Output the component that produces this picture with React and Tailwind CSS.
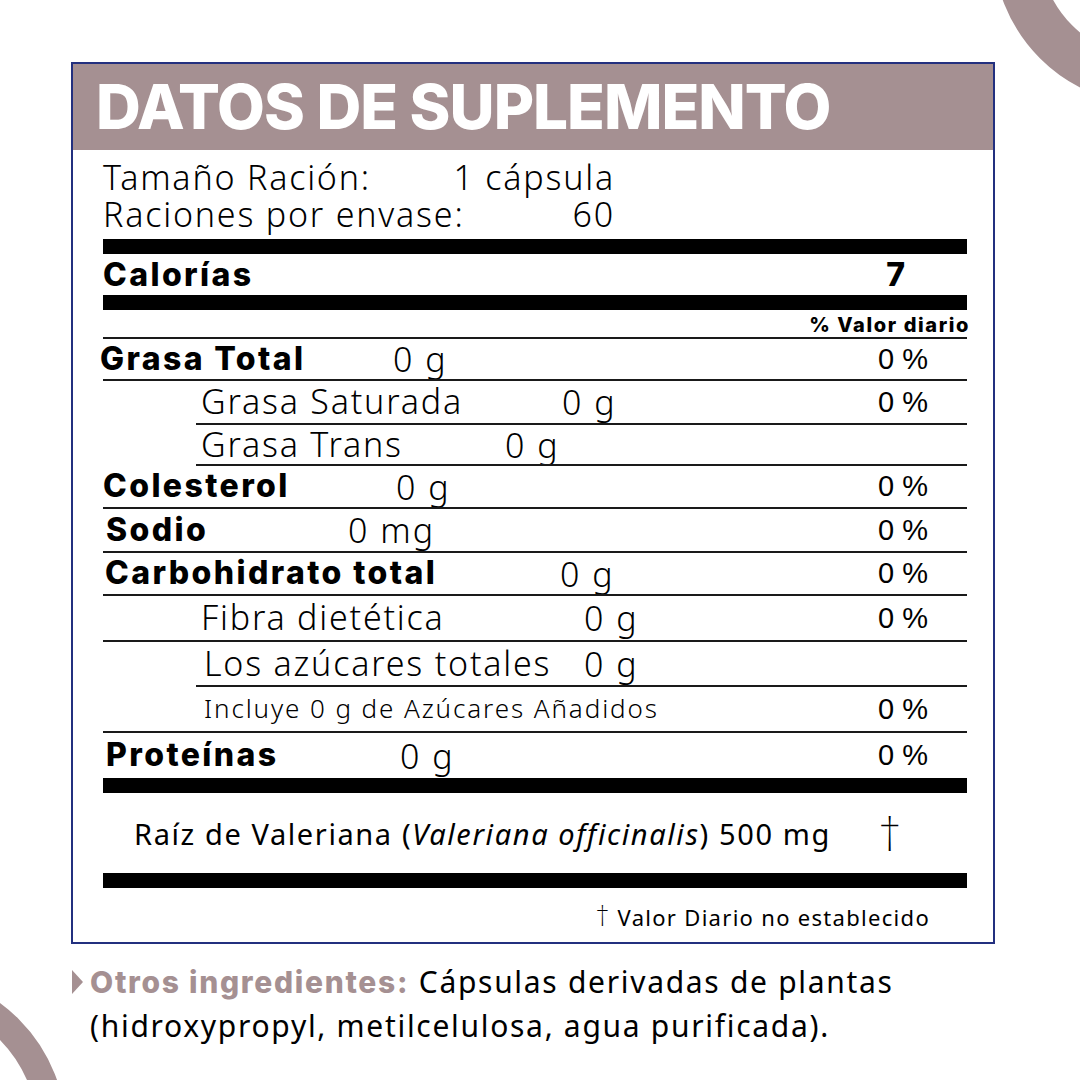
import React from "react";

const Line = ({ indent }) => (
  <div className={indent ? "ml-[93px] h-[2px] bg-[#1a1a1a]" : "h-[2px] bg-[#1a1a1a]"} />
);

const Bar = () => <div className="h-[15px] bg-black" />;

const Row = ({ h, labelBox, labelCls, label, value, pct }) => (
  <div className={`flex items-center ${h}`}>
    <div className={labelBox}>
      <span className={labelCls}>{label}</span>
    </div>
    {value && (
      <span className="font-['Noto_Sans',sans-serif] text-[34px] font-light leading-none tracking-[2px]">
        {value}
      </span>
    )}
    {pct && (
      <span className="ml-auto mr-[39px] font-['Liberation_Sans',sans-serif] text-[29px] leading-none">
        {pct}
      </span>
    )}
  </div>
);

const BOLD = "font-['Inter',sans-serif] text-[32px] font-extrabold leading-none tracking-[2.4px]";
const LIGHT = "font-['Noto_Sans',sans-serif] text-[34px] font-light leading-none tracking-[1.8px]";

export default function App() {
  return (
    <div className="relative w-[1080px] h-[1080px] overflow-hidden bg-white font-['Inter',sans-serif] text-black">
      {/* decorative rings */}
      <div className="absolute left-[993px] top-[-215px] w-[320px] h-[320px] rounded-full border-[46px] border-[#a59092]" />
      <div className="absolute left-[-256px] top-[972px] w-[322px] h-[322px] rounded-full border-[28px] border-[#a59092]" />

      <div className="relative pt-[62px] pl-[71px]">
        <div className="w-[924px] h-[882px] border-2 border-[#23307f] flex flex-col">
          <div className="h-[86px] bg-[#a59092] flex items-center pl-[23px]">
            <span className="text-white text-[62px] font-extrabold leading-none tracking-[-1px]">
              DATOS DE SUPLEMENTO
            </span>
          </div>

          <div className="pl-[30px] pr-[26px] flex flex-col">
            {/* serving */}
            <div className="pt-[9px] pb-[6px] w-[512px] font-['Noto_Sans',sans-serif] text-[34px] font-light tracking-[1.8px]">
              <div className="flex justify-between">
                <span className="inline-block h-[37px] leading-[37px]">Tamaño Ración:</span>
                <span className="inline-block h-[37px] leading-[37px]">1 cápsula</span>
              </div>
              <div className="flex justify-between">
                <span className="inline-block h-[37px] leading-[37px]">Raciones por envase:</span>
                <span className="inline-block h-[37px] leading-[37px]">60</span>
              </div>
            </div>
            <Bar />
            <div className="h-[41px] flex items-center justify-between">
              <span className={BOLD}>Calorías</span>
              <span className="mr-[62px] text-[32px] font-extrabold leading-none">7</span>
            </div>
            <Bar />
            <div className="h-[27px] flex items-end justify-end">
              <span className="-mr-[3px] text-[20px] font-extrabold leading-[24px] tracking-[1.6px]">% Valor diario</span>
            </div>
            <Line />
            <Row h="h-[40px]" labelBox="w-[293px] -ml-[3px]" labelCls={BOLD} label="Grasa Total" value="0 g" pct="0 %" />
            <Line />
            <Row h="h-[42px]" labelBox="w-[459px] pl-[98px]" labelCls={LIGHT} label="Grasa Saturada" value="0 g" pct="0 %" />
            <Line indent />
            <Row h="h-[39px]" labelBox="w-[402px] pl-[98px]" labelCls={LIGHT} label="Grasa Trans" value="0 g" />
            <Line indent />
            <Row h="h-[41px]" labelBox="w-[293px]" labelCls={BOLD} label="Colesterol" value="0 g" pct="0 %" />
            <Line />
            <Row h="h-[42px]" labelBox="w-[245px] pl-[3px]" labelCls={BOLD} label="Sodio" value="0 mg" pct="0 %" />
            <Line />
            <Row h="h-[41px]" labelBox="w-[457px] pl-[2px]" labelCls={BOLD} label="Carbohidrato total" value="0 g" pct="0 %" />
            <Line />
            <Row h="h-[44px]" labelBox="w-[481px] pl-[98px]" labelCls={LIGHT} label="Fibra dietética" value="0 g" pct="0 %" />
            <Line />
            <Row h="h-[43px]" labelBox="w-[481px] pl-[101px]" labelCls={LIGHT} label="Los azúcares totales" value="0 g" />
            <Line indent />
            <Row
              h="h-[44px]"
              labelBox="pl-[101px]"
              labelCls="font-['Noto_Sans',sans-serif] text-[26px] font-light leading-none tracking-[1.9px]"
              label="Incluye 0 g de Azúcares Añadidos"
              pct="0 %"
            />
            <Line />
            <Row h="h-[45px]" labelBox="w-[297px] pl-[3px]" labelCls={BOLD} label="Proteínas" value="0 g" pct="0 %" />
            <Bar />
            <div className="h-[80px] flex items-center pl-[31px]">
              <span className="font-['Noto_Sans',sans-serif] text-[29px] leading-none tracking-[1.6px]">
                Raíz de Valeriana (<span className="italic">Valeriana officinalis</span>) 500 mg
              </span>
              <span className="ml-auto mr-[66px] font-['Noto_Sans',sans-serif] text-[46px] font-extralight leading-none">
                †
              </span>
            </div>
            <Bar />
            <div className="h-[54px] flex items-center justify-end pr-[37px]">
              <span className="font-['Noto_Sans',sans-serif] text-[22px] leading-none tracking-[1.3px]">
                <span className="text-[28px] font-extralight">†</span> Valor Diario no establecido
              </span>
            </div>
          </div>
        </div>

        <div className="pt-[16px] pl-[1px] flex">
          <div className="mt-[10px] w-0 h-0 border-l-[11px] border-l-[#a59092] border-y-[12px] border-y-transparent" />
          <div className="pl-[7px] font-['Noto_Sans',sans-serif] text-[30px] leading-[44px] tracking-[1.7px]">
            <span className="font-['Inter',sans-serif] font-extrabold text-[#a59092]">Otros ingredientes:</span>{" "}
            Cápsulas derivadas de plantas
            <br />
            (hidroxypropyl, metilcelulosa, agua purificada).
          </div>
        </div>
      </div>
    </div>
  );
}
